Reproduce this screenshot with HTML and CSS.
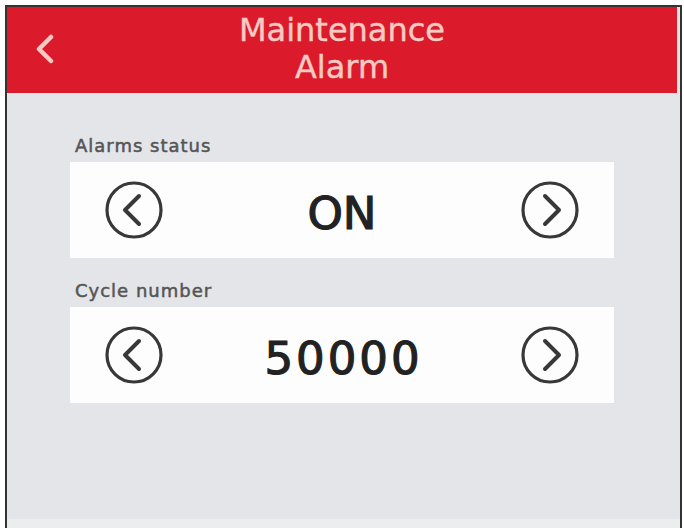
FILE: index.html
```html
<!DOCTYPE html>
<html lang="en">
<head>
<meta charset="UTF-8" />
<meta name="viewport" content="width=device-width, initial-scale=1" />
<title>Maintenance Alarm</title>
<link rel="stylesheet" href="styles.css">
</head>
<body>
<div class="frame">
  <div class="header">
    <button class="back" aria-label="Back">
      <svg width="20" height="30" viewBox="0 0 20 30"><polyline points="16,3 4,15 16,27" /></svg>
    </button>
    <h1 class="title">Maintenance<br>Alarm</h1>
    <span></span>
  </div>

  <div class="content">
    <div class="field">
      <div class="label">Alarms status</div>
      <div class="card">
        <button class="step" aria-label="Previous">
          <svg width="58" height="58" viewBox="0 0 58 58"><circle cx="29" cy="29" r="27" /><polyline points="34,15 20,29 34,43" /></svg>
        </button>
        <div class="value">ON</div>
        <button class="step" aria-label="Next">
          <svg width="58" height="58" viewBox="0 0 58 58"><circle cx="29" cy="29" r="27" /><polyline points="24,15 38,29 24,43" /></svg>
        </button>
      </div>
    </div>

    <div class="field">
      <div class="label">Cycle number</div>
      <div class="card">
        <button class="step" aria-label="Decrease">
          <svg width="58" height="58" viewBox="0 0 58 58"><circle cx="29" cy="29" r="27" /><polyline points="34,15 20,29 34,43" /></svg>
        </button>
        <div class="value num">50000</div>
        <button class="step" aria-label="Increase">
          <svg width="58" height="58" viewBox="0 0 58 58"><circle cx="29" cy="29" r="27" /><polyline points="24,15 38,29 24,43" /></svg>
        </button>
      </div>
    </div>
  </div>
</div>
</body>
</html>
```

FILE: styles.css
```css
body {
  margin: 0;
  background: #fff;
  font-family: "DejaVu Sans", Verdana, sans-serif;
}
.frame {
  margin: 5px 2px 0 5px;
  height: 523px;
  border: 2px solid #333;
  border-bottom: none;
  box-sizing: border-box;
  display: flex;
  flex-direction: column;
  background: #e3e5e9;
}
.header {
  height: 86px;
  flex: none;
  background: #db1b2b;
  display: grid;
  grid-template-columns: 1fr auto 1fr;
  align-items: start;
  box-sizing: border-box;
  padding-top: 5px;
  border-right: 3px solid #e6e3e3;
}
.back {
  justify-self: start;
  align-self: center;
  margin: 0 0 4px 28px;
  padding: 0;
  border: none;
  background: none;
}
.back svg polyline {
  fill: none;
  stroke: #f7cbc4;
  stroke-width: 4.5;
  stroke-linecap: round;
  stroke-linejoin: round;
}
.title {
  margin: 0;
  font-size: 32px;
  font-weight: normal;
  line-height: 37px;
  text-align: center;
  color: #f7cbc4;
  -webkit-text-stroke: 0.4px #f7cbc4;
}
.content {
  flex: 1;
  padding: 43px 66px 0 63px;
  display: flex;
  flex-direction: column;
  gap: 23px;
  background: #e3e5e9;
  border-bottom: 9px solid #eceeed;
}
.field {
  display: flex;
  flex-direction: column;
  gap: 6px;
}
.label {
  margin-left: 5px;
  font-size: 18px;
  line-height: 20px;
  letter-spacing: 1px;
  color: #555;
  -webkit-text-stroke: 0.5px #555;
}
.card {
  height: 96px;
  background: #fdfdfd;
  display: flex;
  align-items: center;
  padding: 0 35px;
}
.step {
  padding: 0;
  border: none;
  background: none;
  width: 58px;
  height: 58px;
  flex: none;
}
.step svg {
  display: block;
  fill: none;
  stroke: #383838;
}
.step circle {
  stroke-width: 3.2;
}
.step polyline {
  stroke-width: 4;
  stroke-linecap: round;
  stroke-linejoin: round;
}
.value {
  flex: 1;
  text-align: center;
  font-size: 45px;
  padding-top: 6px;
  color: #222;
  -webkit-text-stroke: 1.2px #222;
}
.value.num {
  letter-spacing: 3px;
  padding-left: 3px;
}
```
